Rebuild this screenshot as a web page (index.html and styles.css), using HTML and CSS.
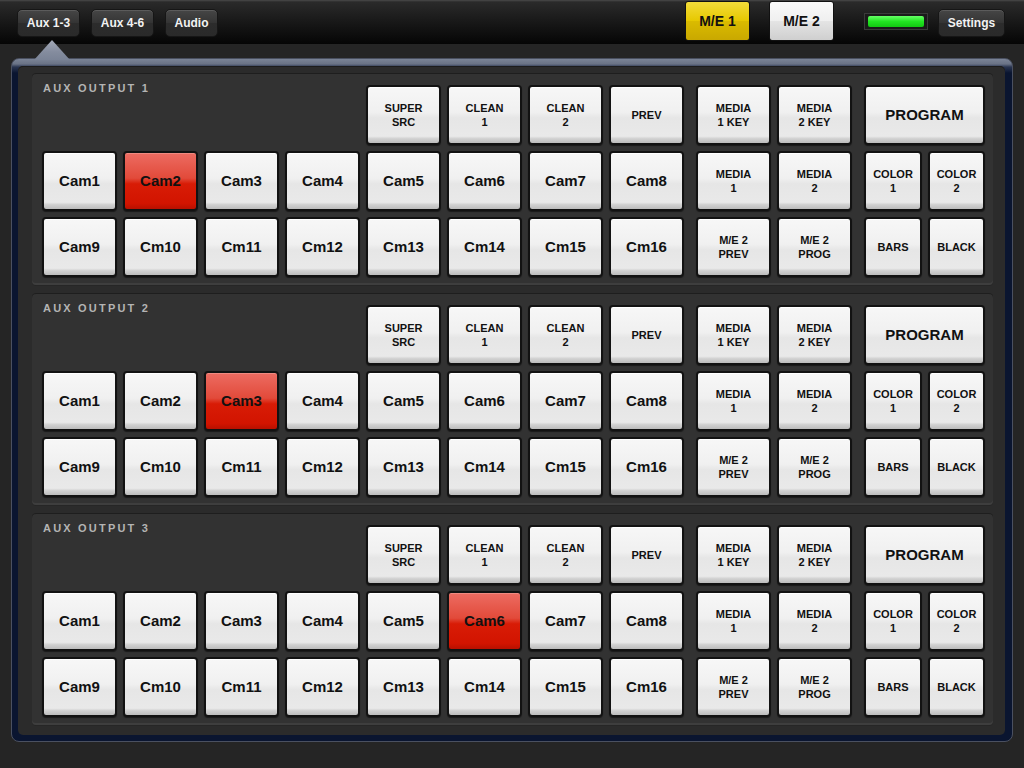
FILE: index.html
```html
<!DOCTYPE html>
<html lang="en">
<head>
  <meta charset="UTF-8">
  <meta name="viewport" content="width=device-width, initial-scale=1.0">
  <title>Aux Outputs</title>
  <link rel="stylesheet" href="styles.css">
</head>
<body>
  <div class="topbar">
    <button class="tab active">Aux 1-3</button>
    <button class="tab">Aux 4-6</button>
    <button class="tab audio">Audio</button>
    <div class="spacer"></div>
    <button class="me me1">M/E 1</button>
    <button class="me me2">M/E 2</button>
    <div class="meter"><span></span></div>
    <button class="tab settings">Settings</button>
  </div>

  <div class="panel">
    <div class="inner">

      <section class="aux">
        <h2 class="title">AUX OUTPUT 1</h2>
        <button class="key sm">SUPER<br>SRC</button>
        <button class="key sm">CLEAN<br>1</button>
        <button class="key sm">CLEAN<br>2</button>
        <button class="key sm">PREV</button>
        <button class="key sm m1">MEDIA<br>1 KEY</button>
        <button class="key sm m2">MEDIA<br>2 KEY</button>
        <button class="key program">PROGRAM</button>
        <button class="key">Cam1</button>
        <button class="key on">Cam2</button>
        <button class="key">Cam3</button>
        <button class="key">Cam4</button>
        <button class="key">Cam5</button>
        <button class="key">Cam6</button>
        <button class="key">Cam7</button>
        <button class="key">Cam8</button>
        <button class="key sm m1">MEDIA<br>1</button>
        <button class="key sm m2">MEDIA<br>2</button>
        <button class="key sm c1">COLOR<br>1</button>
        <button class="key sm c2">COLOR<br>2</button>
        <button class="key">Cam9</button>
        <button class="key">Cm10</button>
        <button class="key">Cm11</button>
        <button class="key">Cm12</button>
        <button class="key">Cm13</button>
        <button class="key">Cm14</button>
        <button class="key">Cm15</button>
        <button class="key">Cm16</button>
        <button class="key sm m1">M/E 2<br>PREV</button>
        <button class="key sm m2">M/E 2<br>PROG</button>
        <button class="key sm c1">BARS</button>
        <button class="key sm c2">BLACK</button>
      </section>

      <section class="aux">
        <h2 class="title">AUX OUTPUT 2</h2>
        <button class="key sm">SUPER<br>SRC</button>
        <button class="key sm">CLEAN<br>1</button>
        <button class="key sm">CLEAN<br>2</button>
        <button class="key sm">PREV</button>
        <button class="key sm m1">MEDIA<br>1 KEY</button>
        <button class="key sm m2">MEDIA<br>2 KEY</button>
        <button class="key program">PROGRAM</button>
        <button class="key">Cam1</button>
        <button class="key">Cam2</button>
        <button class="key on">Cam3</button>
        <button class="key">Cam4</button>
        <button class="key">Cam5</button>
        <button class="key">Cam6</button>
        <button class="key">Cam7</button>
        <button class="key">Cam8</button>
        <button class="key sm m1">MEDIA<br>1</button>
        <button class="key sm m2">MEDIA<br>2</button>
        <button class="key sm c1">COLOR<br>1</button>
        <button class="key sm c2">COLOR<br>2</button>
        <button class="key">Cam9</button>
        <button class="key">Cm10</button>
        <button class="key">Cm11</button>
        <button class="key">Cm12</button>
        <button class="key">Cm13</button>
        <button class="key">Cm14</button>
        <button class="key">Cm15</button>
        <button class="key">Cm16</button>
        <button class="key sm m1">M/E 2<br>PREV</button>
        <button class="key sm m2">M/E 2<br>PROG</button>
        <button class="key sm c1">BARS</button>
        <button class="key sm c2">BLACK</button>
      </section>

      <section class="aux">
        <h2 class="title">AUX OUTPUT 3</h2>
        <button class="key sm">SUPER<br>SRC</button>
        <button class="key sm">CLEAN<br>1</button>
        <button class="key sm">CLEAN<br>2</button>
        <button class="key sm">PREV</button>
        <button class="key sm m1">MEDIA<br>1 KEY</button>
        <button class="key sm m2">MEDIA<br>2 KEY</button>
        <button class="key program">PROGRAM</button>
        <button class="key">Cam1</button>
        <button class="key">Cam2</button>
        <button class="key">Cam3</button>
        <button class="key">Cam4</button>
        <button class="key">Cam5</button>
        <button class="key on">Cam6</button>
        <button class="key">Cam7</button>
        <button class="key">Cam8</button>
        <button class="key sm m1">MEDIA<br>1</button>
        <button class="key sm m2">MEDIA<br>2</button>
        <button class="key sm c1">COLOR<br>1</button>
        <button class="key sm c2">COLOR<br>2</button>
        <button class="key">Cam9</button>
        <button class="key">Cm10</button>
        <button class="key">Cm11</button>
        <button class="key">Cm12</button>
        <button class="key">Cm13</button>
        <button class="key">Cm14</button>
        <button class="key">Cm15</button>
        <button class="key">Cm16</button>
        <button class="key sm m1">M/E 2<br>PREV</button>
        <button class="key sm m2">M/E 2<br>PROG</button>
        <button class="key sm c1">BARS</button>
        <button class="key sm c2">BLACK</button>
      </section>

    </div>
  </div>
</body>
</html>
```

FILE: styles.css
```css
body {
    margin: 0;
    font-family: "Liberation Sans", Arial, sans-serif;
    background: #252525;
}
button {
    font-family: inherit;
    cursor: pointer;
    padding: 0;
}

/* top bar */
.topbar {
    height: 44px;
    display: flex;
    align-items: flex-start;
    gap: 11px;
    padding: 0 19px 0 17px;
    box-sizing: border-box;
    background: linear-gradient(#4a4a4a 0, #2a2a2a 2px, #1a1a1a 45%, #050505 100%);
}
.spacer {
    flex: 1;
}
.tab {
    position: relative;
    margin-top: 9px;
    height: 28px;
    width: 63px;
    border: 1px solid #161616;
    border-radius: 5px;
    background: linear-gradient(#464646, #343434 50%, #2c2c2c 51%, #2a2a2a);
    box-shadow: inset 0 1px 0 rgba(255, 255, 255, 0.12);
    color: #f2f2f2;
    font-size: 12px;
    font-weight: bold;
}
.audio {
    width: 53px;
}
.settings {
    width: 67px;
    margin-left: -1px;
}
.tab.active::after {
    content: "";
    position: absolute;
    left: 16px;
    top: 30px;
    width: 36px;
    height: 20px;
    background: linear-gradient(#a4aab8, #848c9e 60%, #7a8396);
    clip-path: polygon(50% 0, 100% 100%, 0 100%);
}
.me {
    margin-top: 1px;
    height: 40px;
    width: 65px;
    border: 1px solid #111;
    border-radius: 3px;
    font-size: 14px;
    font-weight: bold;
    color: #111;
}
.me1 {
    background: linear-gradient(#f3dc3a, #e6c800 50%, #dabb00 51%, #c9a800);
    margin-right: 8px;
}
.me2 {
    background: linear-gradient(#fafafa, #efefef 50%, #e4e4e4 51%, #cfcfcf);
    margin-right: 19px;
}
.meter {
    margin-top: 13px;
    width: 64px;
    height: 17px;
    box-sizing: border-box;
    padding: 2px 3px;
    background: #1a1a1a;
    border: 1px solid #3a3a3a;
}
.meter span {
    display: block;
    height: 100%;
    border-radius: 2px;
    background: linear-gradient(#66ff66, #22e422 50%, #12c812);
}

/* main panel */
.panel {
    margin: 14px 11px 0;
    border: 1px solid #4a5060;
    border-radius: 8px;
    padding: 7px 7px 6px 6px;
    background: linear-gradient(#7a8396 0, #6a7386 5px, #2a3550 8px, #0a1530 14px, #0a1530);
}
.inner {
    display: flex;
    flex-direction: column;
    gap: 8px;
    padding: 7px 12px 10px 14px;
    border-radius: 5px;
    background: #2b2b2b;
    box-shadow: inset 0 1px 0 #1c1c1c;
}
.aux {
    display: grid;
    grid-template-columns: repeat(8, 75px) 0 75px 75px 0 58px 57px;
    grid-auto-rows: 60px;
    gap: 6px;
    padding: 12px 8px 8px 10px;
    border-radius: 4px;
    background: #323232;
    box-shadow: inset 0 1px 0 #1e1e1e, inset 0 -2px 0 #3e3e3e, 0 1px 0 #262626;
}
.title {
    grid-column: span 4;
    align-self: start;
    margin: -3px 0 0 1px;
    font-size: 11px;
    line-height: 13px;
    font-weight: bold;
    letter-spacing: 2.2px;
    color: #b4b4b4;
}

/* keys */
.key {
    display: flex;
    align-items: center;
    justify-content: center;
    border: 2px solid #121212;
    border-radius: 4px;
    background: linear-gradient(#f7f7f7, #f0f0f0 45%, #e6e6e6 55%, #e9e9e9 88%, #d2d2d2 92%, #bcbcbc);
    box-shadow: inset 0 1px 0 #ffffff, 0 1px 1px rgba(0, 0, 0, 0.5);
    color: #111;
    font-size: 15px;
    font-weight: bold;
    line-height: 16px;
}
.key.sm {
    font-size: 11px;
    line-height: 14px;
}
.key.on {
    background: linear-gradient(#ec6c62, #e24a3a 45%, #d81c06 55%, #d21400 90%, #b81000);
    box-shadow: inset 0 1px 0 #f08a80, 0 1px 1px rgba(0, 0, 0, 0.5);
}
.m1 {
    grid-column: 10;
}
.m2 {
    grid-column: 11;
}
.program {
    grid-column: 13 / span 2;
}
.c1 {
    grid-column: 13;
}
.c2 {
    grid-column: 14;
}
```
